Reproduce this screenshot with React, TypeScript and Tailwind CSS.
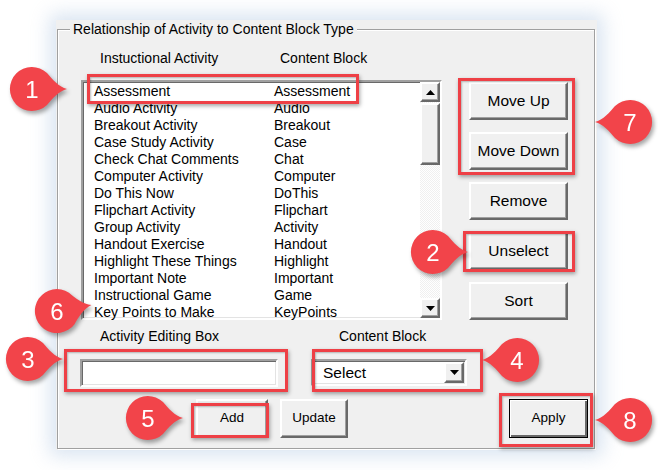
import React from 'react';

const rows: [string, string][] = [
  ['Assessment', 'Assessment'],
  ['Audio Activity', 'Audio'],
  ['Breakout Activity', 'Breakout'],
  ['Case Study Activity', 'Case'],
  ['Check Chat Comments', 'Chat'],
  ['Computer Activity', 'Computer'],
  ['Do This Now', 'DoThis'],
  ['Flipchart Activity', 'Flipchart'],
  ['Group Activity', 'Activity'],
  ['Handout Exercise', 'Handout'],
  ['Highlight These Things', 'Highlight'],
  ['Important Note', 'Important'],
  ['Instructional Game', 'Game'],
  ['Key Points to Make', 'KeyPoints'],
];

const raised =
  'bg-[#f0f0f0] border-2 border-t-white border-l-white border-b-[#696969] border-r-[#696969] shadow-[inset_-1px_-1px_0_#a0a0a0]';
const sunken =
  'bg-white border-2 border-t-[#a0a0a0] border-l-[#a0a0a0] border-b-white border-r-white shadow-[inset_1px_1px_0_#696969,inset_-1px_-1px_0_#e3e3e3]';

const Arrow = ({ up }: { up?: boolean }) => (
  <svg width="9" height="5" viewBox="0 0 9 5">
    <path d={up ? 'M0 5 L4.5 0 L9 5 Z' : 'M0 0 L4.5 5 L9 0 Z'} fill="#000" />
  </svg>
);

const Badge = ({
  n,
  className,
  flip,
  angle = 0,
}: {
  n: number;
  className: string;
  flip?: boolean;
  angle?: number;
}) => (
  <svg
    width="90"
    height="60"
    viewBox="-45 -30 90 60"
    className={`absolute overflow-visible drop-shadow-[2px_3px_2px_rgba(0,0,0,0.35)] ${className}`}
  >
    <path
      d="M35 0 C27 -2 20 -10 15 -16 A22 22 0 1 0 15 16 C20 10 27 2 35 0 Z"
      fill="#f2444a"
      transform={`${flip ? 'scale(-1 1) ' : ''}rotate(${angle})`}
    />
    <text
      x="0"
      y="8.5"
      textAnchor="middle"
      fontSize="24"
      fill="#fff"
      fontFamily="Liberation Sans, Arial, sans-serif"
    >
      {n}
    </text>
  </svg>
);

const RedBox = ({ className }: { className: string }) => (
  <div
    className={`absolute border-[3px] border-[#ee4046] shadow-[1px_2px_4px_rgba(0,0,0,0.35),inset_1px_1px_2px_rgba(0,0,0,0.25)] ${className}`}
  />
);

export default function App() {
  return (
    <div className="relative w-[658px] h-[470px] overflow-hidden bg-white pt-[20px] pl-[56px] font-['Liberation_Sans',Arial,sans-serif] text-black">
      <div className="w-[541px] h-[430px] bg-[#f0f0f0] pt-[9px] pl-[1px] shadow-[0_0_18px_6px_rgba(170,195,225,0.45)]">
        <div className="relative w-[538px] h-[420px] border border-[#a0a0a0] shadow-[1px_1px_0_#fff,inset_1px_1px_0_#fff]">
          <span className="absolute left-[12px] -top-[9px] px-[3px] bg-[#f0f0f0] text-[14px] leading-[17px]">
            Relationship of Activity to Content Block Type
          </span>

          <div className="mt-[20px] h-[17px] flex pl-[42px] text-[14px] leading-[17px]">
            <span className="w-[180px]">Instuctional Activity</span>
            <span>Content Block</span>
          </div>

          <div className="mt-[13px] flex">
            <div className={`ml-[23px] w-[361px] h-[240px] flex ${sunken}`}>
              <div className="flex-1 pt-[1px] pl-[11px] text-[14px] leading-[17px]">
                {rows.map(([a, b]) => (
                  <div key={a} className="flex h-[17px]">
                    <span className="w-[180px] whitespace-nowrap">{a}</span>
                    <span>{b}</span>
                  </div>
                ))}
              </div>
              <div className="w-[20px] flex flex-col bg-[repeating-conic-gradient(#ffffff_0%_25%,#f0f0f0_0%_50%)] bg-size-[2px_2px]">
                <div className={`h-[20px] flex items-center justify-center ${raised}`}>
                  <Arrow up />
                </div>
                <div className={`mt-[1px] h-[62px] ${raised}`} />
                <div className="flex-1" />
                <div className={`h-[20px] flex items-center justify-center ${raised}`}>
                  <Arrow />
                </div>
              </div>
            </div>

            <div className="ml-[27px] mt-[2px] flex flex-col gap-[12px] text-[15.5px]">
              {['Move Up', 'Move Down', 'Remove', 'Unselect', 'Sort'].map((t) => (
                <button key={t} className={`w-[99px] h-[38px] flex items-center justify-center ${raised}`}>
                  {t}
                </button>
              ))}
            </div>
          </div>

          <div className="mt-[8px] h-[17px] flex pl-[42px] text-[14px] leading-[17px]">
            <span className="w-[239px]">Activity Editing Box</span>
            <span>Content Block</span>
          </div>

          <div className="mt-[14px] flex">
            <div className={`ml-[22px] w-[198px] h-[28px] ${sunken}`} />
            <div className={`ml-[33px] w-[156px] h-[27px] flex items-center ${sunken}`}>
              <span className="flex-1 pl-[10px] text-[15.5px] leading-[18px]">Select</span>
              <div className={`w-[20px] h-[21px] mr-[1px] flex items-center justify-center ${raised}`}>
                <Arrow />
              </div>
            </div>
          </div>

          <div className="mt-[12px] flex text-[13.5px]">
            <button className={`ml-[138px] w-[72px] h-[39px] flex items-center justify-center ${raised}`}>Add</button>
            <button className={`ml-[12px] w-[68px] h-[39px] flex items-center justify-center ${raised}`}>Update</button>
            <button className="ml-[161px] w-[79px] h-[39px] flex items-center justify-center bg-[#f0f0f0] border border-black shadow-[inset_1px_1px_0_#fff,inset_-2px_-2px_0_#696969]">
              Apply
            </button>
          </div>
        </div>
      </div>

      <RedBox className="left-[87px] top-[74px] w-[272px] h-[30px]" />
      <RedBox className="left-[458px] top-[78px] w-[117px] h-[97px]" />
      <RedBox className="left-[463px] top-[231px] w-[112px] h-[41px]" />
      <RedBox className="left-[64px] top-[349px] w-[224px] h-[43px]" />
      <RedBox className="left-[312px] top-[349px] w-[171px] h-[43px]" />
      <RedBox className="left-[191px] top-[403px] w-[78px] h-[35px]" />
      <RedBox className="left-[499px] top-[393px] w-[94px] h-[54px]" />

      <Badge n={1} className="left-[-13px] top-[59px]" />
      <Badge n={2} className="left-[388px] top-[222px]" />
      <Badge n={3} className="left-[-17px] top-[329px]" />
      <Badge n={4} flip className="left-[472px] top-[330px]" />
      <Badge n={5} className="left-[103px] top-[388px]" />
      <Badge n={6} angle={-10} className="left-[12px] top-[281px]" />
      <Badge n={7} flip className="left-[585px] top-[92px]" />
      <Badge n={8} flip className="left-[585px] top-[390px]" />
    </div>
  );
}
